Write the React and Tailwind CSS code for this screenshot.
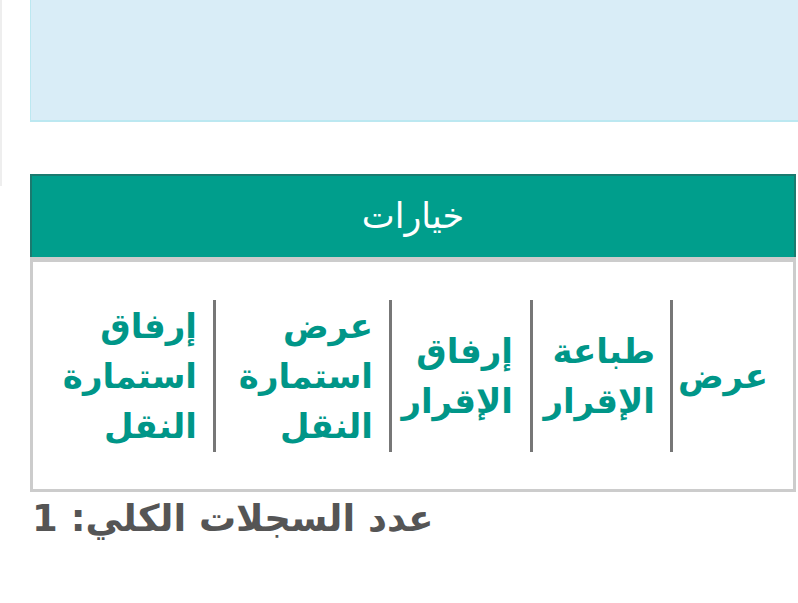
import React from 'react';

const options = [
  { lines: ['عرض'], w: 'w-[123px] pr-[25px]', sep: true },
  { lines: ['طباعة', 'الإقرار'], w: 'w-[140px] pr-[15px]', sep: true },
  { lines: ['إرفاق', 'الإقرار'], w: 'w-[141px] pr-[17px]', sep: true },
  { lines: ['عرض', 'استمارة', 'النقل'], w: 'w-[176px] pr-[16px]', sep: true },
  { lines: ['إرفاق', 'استمارة', 'النقل'], w: 'w-[180px] pr-[16px]', sep: false },
];

const App = () => {
  return (
    <div className="relative w-[798px] h-[603px] overflow-hidden bg-white font-['DejaVu_Sans',sans-serif]">
      {/* faint edge of the page on the left */}
      <div className="absolute left-0 top-0 w-[2px] h-[186px] bg-[#eeeeee]"></div>

      <div className="pl-[30px]">
        {/* info box */}
        <div className="h-[122px] w-[800px] bg-[#d9edf7] border-l border-b-2 border-[#bce8f1]"></div>

        <div className="mt-[52px] w-[766px]">
          {/* header */}
          <div className="h-[83px] bg-[#009e8c] border-t-2 border-x-2 border-[#1b7a6f] flex items-center justify-center">
            <span className="text-white text-[35px] leading-none">خيارات</span>
          </div>

          {/* options row */}
          <div
            dir="rtl"
            className="h-[235px] border-x-[3px] border-t-[5px] border-b-[3px] border-[#cccccc] flex items-center"
          >
            {options.map((o, i) => (
              <div
                key={i}
                className={`${o.w} h-[152px] flex items-center justify-start ${o.sep ? 'border-l-[3px] border-[#777777]' : ''}`}
              >
                <div className="text-right text-[#009688] font-bold text-[34px] leading-[50px]">
                  {o.lines.map((l, j) => (
                    <div key={j}>{l}</div>
                  ))}
                </div>
              </div>
            ))}
          </div>

          {/* total */}
          <div dir="rtl" className="text-left pl-[2px] text-[#555555] font-bold text-[37px] leading-[54px]">
            عدد السجلات الكلي: 1
          </div>
        </div>
      </div>
    </div>
  );
};

export default App;
